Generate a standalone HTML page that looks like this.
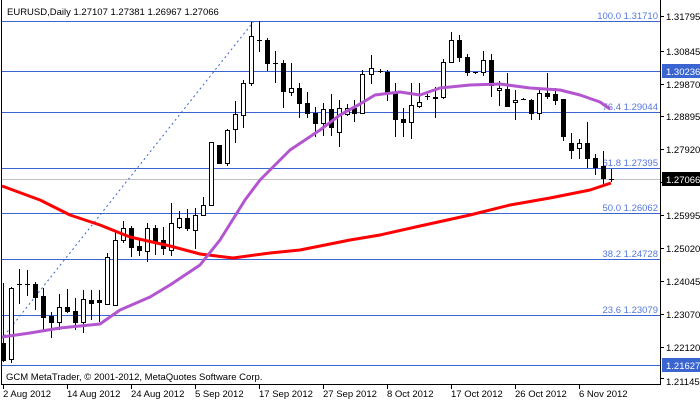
<!DOCTYPE html>
<html><head><meta charset="utf-8"><style>
html,body{margin:0;padding:0;background:#fff;}
svg{display:block;font-family:"Liberation Sans","DejaVu Sans",sans-serif;}
</style></head><body>
<svg id="c" width="700" height="402" viewBox="0 0 700 402" xmlns="http://www.w3.org/2000/svg">
<rect width="700" height="402" fill="#fff"/>
<g stroke="#3a64d0" stroke-width="1" shape-rendering="crispEdges">
<line x1="2" y1="21.5" x2="660" y2="21.5"/>
<line x1="2" y1="71.5" x2="660" y2="71.5"/>
<line x1="2" y1="112.5" x2="660" y2="112.5"/>
<line x1="2" y1="168.5" x2="660" y2="168.5"/>
<line x1="2" y1="213.5" x2="660" y2="213.5"/>
<line x1="2" y1="259.5" x2="660" y2="259.5"/>
<line x1="2" y1="315.5" x2="660" y2="315.5"/>
<line x1="2" y1="365.5" x2="660" y2="365.5"/>
</g>
<line x1="2" y1="179.5" x2="660" y2="179.5" stroke="#c0c0c0" shape-rendering="crispEdges"/>
<line x1="4" y1="336" x2="254" y2="21" stroke="#3a64d0" stroke-dasharray="2,3"/>
<g font-size="9.5" fill="#5577dd" text-anchor="end">
<text x="658" y="19">100.0 1.31710</text>
<text x="658" y="110">76.4 1.29044</text>
<text x="658" y="166">61.8 1.27395</text>
<text x="658" y="211">50.0 1.26062</text>
<text x="658" y="257">38.2 1.24728</text>
<text x="658" y="313">23.6 1.23079</text>
</g>
<g id="cd" shape-rendering="crispEdges"></g>
<polyline fill="none" stroke="#ff0000" stroke-width="3" stroke-linejoin="round" points="2,186 40,200 70,215 100,225 130,237 170,246 200,254 233,258 270,253 300,250 350,240 380,235 420,226 470,215 510,205 550,198 590,190 611,183"/>
<polyline fill="none" stroke="#b455d0" stroke-width="3" stroke-linejoin="round" points="2,337 30,333 60,328 100,324 120,310 150,297 170,285 200,265 220,240 245,200 260,180 290,150 320,130 340,115 360,104 375,95 400,92 420,95 440,88 470,85 500,84 530,88 560,90 580,95 600,102 610,109"/>
<g stroke="#000" shape-rendering="crispEdges">
<line x1="660.5" y1="0" x2="660.5" y2="385"/>
<line x1="2" y1="384.5" x2="661" y2="384.5"/>
<line x1="1.5" y1="0" x2="1.5" y2="385"/>
</g>
<g id="ticks" stroke="#000" shape-rendering="crispEdges"></g>
<rect x="662" y="64" width="38" height="14" fill="#3a64d0"/>
<rect x="662" y="172" width="38" height="14" fill="#000"/>
<rect x="662" y="358" width="38" height="14" fill="#3a64d0"/>
<g font-size="9.5" fill="#000">
<text x="666" y="20">1.31795</text>
<text x="666" y="55">1.30845</text>
<text x="666" y="75" fill="#fff">1.30236</text>
<text x="666" y="88">1.29870</text>
<text x="666" y="120">1.28895</text>
<text x="666" y="153">1.27920</text>
<text x="666" y="183" fill="#fff">1.27066</text>
<text x="666" y="219">1.25995</text>
<text x="666" y="252">1.25020</text>
<text x="666" y="285">1.24045</text>
<text x="666" y="318">1.23070</text>
<text x="666" y="351">1.22120</text>
<text x="666" y="369" fill="#fff">1.21627</text>
<text x="666" y="385">1.21145</text>
<text x="7" y="15">EURUSD,Daily  1.27107 1.27381 1.26967 1.27066</text>
<text x="6" y="380">GCM MetaTrader, © 2001-2012, MetaQuotes Software Corp.</text>
<text x="3" y="397">2 Aug 2012</text>
<text x="67" y="397">14 Aug 2012</text>
<text x="131" y="397">24 Aug 2012</text>
<text x="195" y="397">5 Sep 2012</text>
<text x="259" y="397">17 Sep 2012</text>
<text x="323" y="397">27 Sep 2012</text>
<text x="387" y="397">8 Oct 2012</text>
<text x="451" y="397">17 Oct 2012</text>
<text x="515" y="397">26 Oct 2012</text>
<text x="579" y="397">6 Nov 2012</text>
</g>
</svg>
<script>
var d=[[3,'b',343,360,283,362],[11,'w',288,359,287,363],[19,'d',284,284,269,304],[27,'d',284,284,270,296],[35,'b',284,297,282,310],[43,'b',296,317,288,330],[51,'b',316,322,312,338],[59,'w',307,322,294,330],[67,'b',307,311,289,313],[75,'b',311,322,298,330],[83,'w',299,322,290,333],[91,'b',300,303,290,320],[99,'b',300,302,290,322],[107,'w',257,304,253,305],[115,'w',240,305,230,273],[123,'w',228,240,221,243],[131,'b',228,247,226,257],[139,'b',246,250,240,256],[147,'w',228,251,223,262],[155,'b',228,241,225,255],[163,'b',240,248,227,255],[171,'w',223,250,203,256],[179,'w',218,227,211,229],[187,'b',218,228,209,231],[195,'w',215,230,208,249],[203,'w',205,215,197,213],[211,'w',142,205,142,206],[219,'b',145,163,145,164],[227,'w',130,163,129,166],[235,'w',114,129,101,143],[243,'w',83,115,80,128],[251,'w',36,83,22,86],[259,'d',40,40,21,52],[267,'b',40,63,38,71],[275,'d',63,63,51,83],[283,'b',63,91,60,108],[291,'w',88,92,63,96],[299,'b',88,103,83,118],[307,'b',103,113,92,118],[315,'b',113,123,107,137],[323,'w',109,123,103,136],[331,'b',109,127,94,136],[339,'w',108,132,100,147],[347,'w',108,114,104,116],[354,'b',108,113,100,122],[362,'w',74,113,70,113],[371,'w',68,74,55,84],[380,'d',71,71,69,73],[387,'b',72,92,70,101],[395,'b',93,119,83,137],[403,'b',119,122,108,137],[411,'w',105,122,83,139],[419,'w',102,106,83,108],[427,'d',96,96,94,100],[435,'b',97,98,87,118],[443,'w',62,97,59,99],[451,'w',40,62,32,62],[459,'b',40,57,35,62],[467,'b',57,72,54,76],[475,'d',72,72,72,74],[483,'w',60,72,51,76],[491,'b',60,85,54,97],[499,'w',88,90,81,106],[507,'b',89,106,73,107],[515,'w',100,102,90,120],[523,'d',99,99,98,100],[531,'b',100,113,99,120],[539,'w',93,113,89,120],[547,'b',93,96,73,99],[555,'b',94,100,88,105],[563,'b',99,136,99,141],[571,'b',143,150,133,159],[579,'w',143,148,139,159],[587,'b',143,158,122,168],[595,'b',158,167,154,175],[603,'b',166,178,151,184],[611,'d',179,179,169,182]];
var ns='http://www.w3.org/2000/svg',g=document.getElementById('cd');
function el(n,a){var e=document.createElementNS(ns,n);for(var k in a)e.setAttribute(k,a[k]);g.appendChild(e);return e;}
d.forEach(function(c){var x=c[0];
el('line',{x1:x+.5,y1:c[4],x2:x+.5,y2:c[5],stroke:'#000'});
if(c[1]=='d'){el('line',{x1:x-2,y1:c[2]+.5,x2:x+3,y2:c[2]+.5,stroke:'#000'});}
else{el('rect',{x:x-1.5,y:c[2]+.5,width:4,height:Math.max(1,c[3]-c[2]),fill:c[1]=='w'?'#fff':'#000',stroke:'#000'});}
});
var t=document.getElementById('ticks');
[20,55,88,120,153,186,219,252,285,318,351,382].forEach(function(y){var e=document.createElementNS(ns,'line');e.setAttribute('x1',660);e.setAttribute('x2',664);e.setAttribute('y1',y-3.5);e.setAttribute('y2',y-3.5);t.appendChild(e);});
for(var i=0;i<10;i++){var x=3.5+64*i;var e=document.createElementNS(ns,'line');e.setAttribute('x1',x);e.setAttribute('x2',x);e.setAttribute('y1',385);e.setAttribute('y2',389);t.appendChild(e);}
</script>
</body></html>
